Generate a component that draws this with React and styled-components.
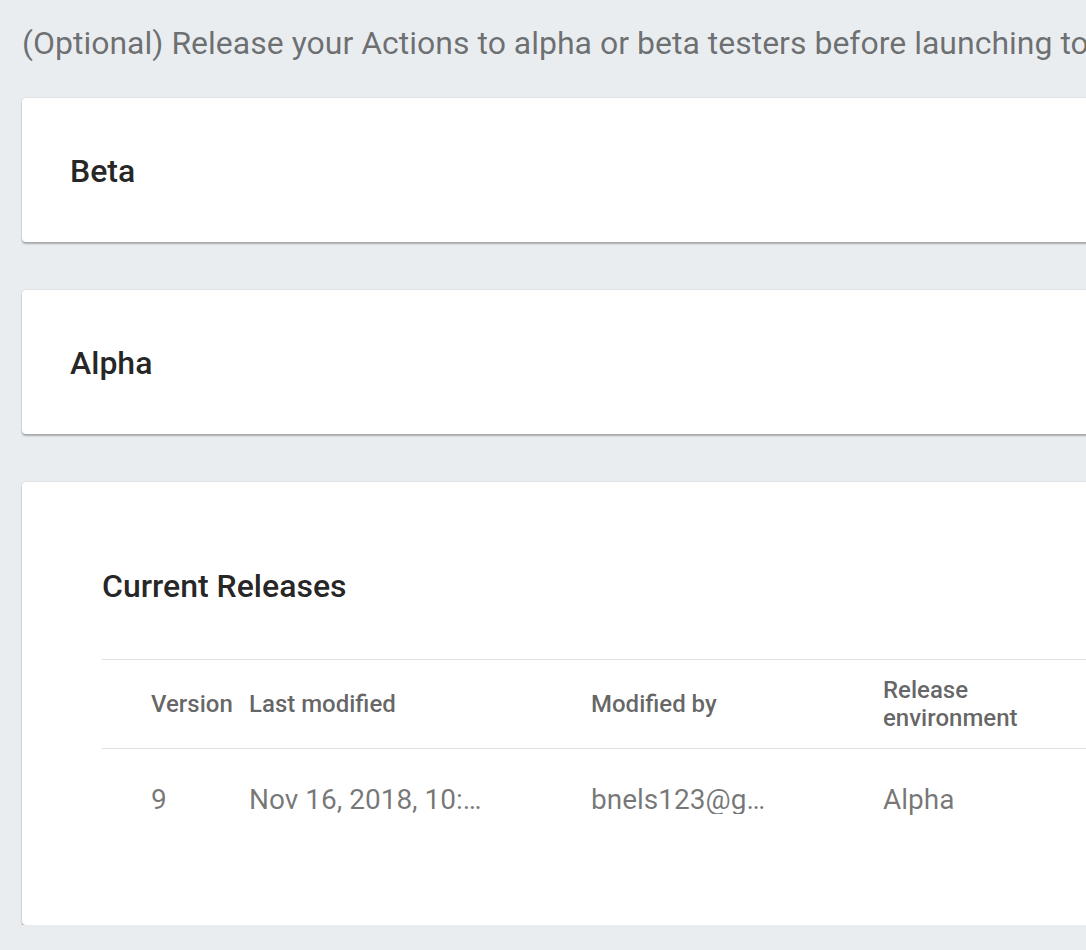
import React from 'react';
import styled, { createGlobalStyle } from 'styled-components';

const GlobalStyle = createGlobalStyle`
  html, body {
    margin: 0;
    padding: 0;
    background-color: #E9EDF0;
    overflow: hidden;
  }
  body {
    font-family: Roboto, "Liberation Sans", Arial, sans-serif;
    -webkit-font-smoothing: antialiased;
  }
`

const Page = styled.div`
  width: 1400px;
  padding: 27px 0 0 22px;
  box-sizing: border-box;
`

const Intro = styled.p`
  margin: 0 0 39px 0;
  font-size: 32px;
  line-height: 32px;
  color: rgba(0, 0, 0, 0.54);
  white-space: nowrap;
`

const Stack = styled.div`
  display: flex;
  flex-direction: column;
  gap: 48px;
`

const Card = styled.section`
  background-color: #FFFFFF;
  border-radius: 4px;
  box-shadow: 0 2px 2px rgba(0, 0, 0, 0.28), 0 0 2px rgba(0, 0, 0, 0.1);
  padding: ${p => (p.$wide ? '80px 0 80px 80px' : '49px 48px 47px')};
`

const CardTitle = styled.h2`
  margin: 0;
  font-size: 32px;
  font-weight: 500;
  line-height: 48px;
  color: rgba(0, 0, 0, 0.87);
`

const Table = styled.div`
  margin-top: 49px;
  border-top: 1px solid #E0E0E0;
`

const Row = styled.div`
  display: grid;
  grid-template-columns: 131px 342px 292px 240px 1fr;
  align-items: center;
  min-height: ${p => (p.$head ? '88px' : '96px')};
  border-bottom: ${p => (p.$head ? '1px solid #E0E0E0' : 'none')};
`

const Cell = styled.div`
  padding-left: ${p => (p.$first ? '49px' : '16px')};
  padding-right: ${p => (p.$first ? '0' : '16px')};
  padding-top: ${p => (p.$head ? '16px' : '19px')};
  padding-bottom: ${p => (p.$head ? '16px' : '13px')};
  font-size: ${p => (p.$head ? '24px' : '28px')};
  font-weight: ${p => (p.$head ? 500 : 400)};
  line-height: 28px;
  color: ${p => (p.$head ? 'rgba(0, 0, 0, 0.62)' : 'rgba(0, 0, 0, 0.54)')};
  min-width: 0;
`

const Clip = styled.span`
  display: block;
  max-width: ${p => p.$max}px;
  white-space: nowrap;
  overflow: hidden;
  text-overflow: ellipsis;
`

const releases = [
  { version: '9', modified: 'Nov 16, 2018, 10:42:15 AM', by: 'bnels123@gmail.com', env: 'Alpha' },
]

export default function App() {
  return (
    <>
      <GlobalStyle />
      <Page>
        <Intro>
          (Optional) Release your Actions to alpha or beta testers before launching to production.
        </Intro>
        <Stack>
          <Card>
            <CardTitle>Beta</CardTitle>
          </Card>
          <Card>
            <CardTitle>Alpha</CardTitle>
          </Card>
          <Card $wide>
            <CardTitle>Current Releases</CardTitle>
            <Table>
              <Row $head>
                <Cell $head $first>Version</Cell>
                <Cell $head>Last modified</Cell>
                <Cell $head>Modified by</Cell>
                <Cell $head>Release<br />environment</Cell>
                <Cell $head />
              </Row>
              {releases.map((item, index) => (
                <Row key={index}>
                  <Cell $first>{item.version}</Cell>
                  <Cell><Clip $max={234}>{item.modified}</Clip></Cell>
                  <Cell><Clip $max={184}>{item.by}</Clip></Cell>
                  <Cell>{item.env}</Cell>
                  <Cell />
                </Row>
              ))}
            </Table>
          </Card>
        </Stack>
      </Page>
    </>
  );
}
